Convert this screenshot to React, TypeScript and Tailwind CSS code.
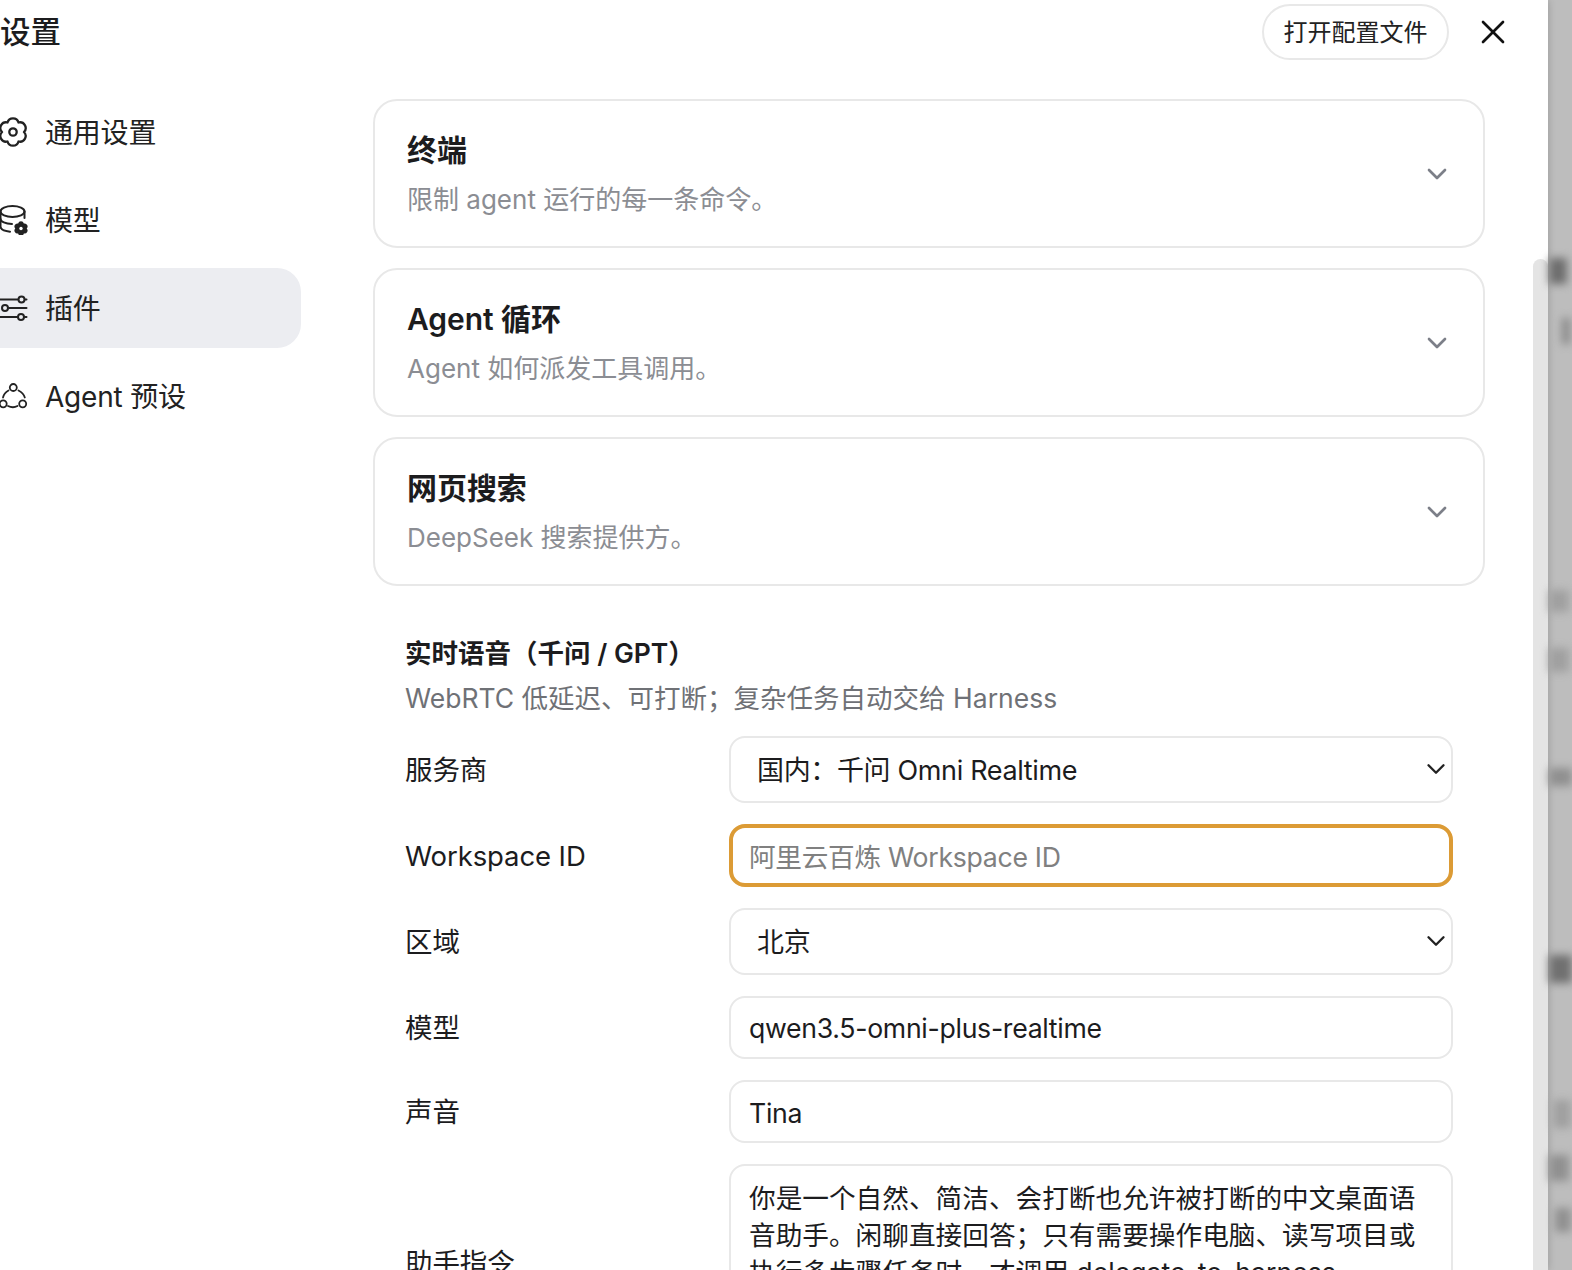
import {ChevronDown, X} from "lucide-react";

const fontStack =
  "font-['Inter','Noto_Sans_CJK_SC','Noto_Sans_CJK_JP',sans-serif]";

const lobes =
  "M11 0A5.7 5.7 0 0 1 5.5 9.5A5.7 5.7 0 0 1 -5.5 9.5A5.7 5.7 0 0 1 -11 0A5.7 5.7 0 0 1 -5.5 -9.5A5.7 5.7 0 0 1 5.5 -9.5A5.7 5.7 0 0 1 11 0Z";

function IconFrame({children}: {children: React.ReactNode}) {
  return (
    <svg
      width={30}
      height={30}
      viewBox="0 0 30 30"
      fill="none"
      stroke="currentColor"
      strokeWidth={2}
      strokeLinecap="round"
      strokeLinejoin="round"
      className="shrink-0"
    >
      {children}
    </svg>
  );
}

function GearIcon() {
  return (
    <IconFrame>
      <g transform="translate(13 15)" strokeWidth={2.3}>
        <path d={lobes} />
        <circle r={3.7} />
      </g>
    </IconFrame>
  );
}

function DatabaseIcon() {
  return (
    <IconFrame>
      <ellipse cx={12.5} cy={6.5} rx={12} ry={5.4} />
      <path d="M0.5 6.5v15c0 2.6 4 4.6 9.5 5.2" />
      <path d="M0.5 14c0 2.6 5 4.8 11.5 5" />
      <path d="M24.5 6.5v6.5" />
      <g transform="translate(21 23.5) scale(0.52)" fill="currentColor" stroke="none">
        <path d={lobes} />
      </g>
      <circle cx={21} cy={23.5} r={1.7} fill="white" stroke="none" />
    </IconFrame>
  );
}

function SlidersIcon() {
  return (
    <IconFrame>
      <path d="M0 6.5h18M25 6.5h1.5" />
      <circle cx={21.5} cy={6.5} r={3} />
      <path d="M9 15h17.5" />
      <circle cx={5} cy={15} r={3} />
      <path d="M0 24h17.5M24.5 24h2" />
      <circle cx={21} cy={24} r={3} />
    </IconFrame>
  );
}

function AgentIcon() {
  return (
    <IconFrame>
      <g strokeWidth={1.8}>
        <circle cx={13.3} cy={6.5} r={3.5} />
        <circle cx={3.2} cy={22.8} r={3.5} />
        <circle cx={22.7} cy={22.8} r={3.5} />
        <path d="M18.5 9.5Q23.5 12 24.8 16.5" />
        <path d="M8.5 9.5Q4 12 3 16.5" />
        <path d="M8 25Q13 27.5 17.5 25" />
      </g>
    </IconFrame>
  );
}

const navItems = [
  {label: "通用设置", icon: <GearIcon />},
  {label: "模型", icon: <DatabaseIcon />},
  {label: "插件", icon: <SlidersIcon />, active: true},
  {label: "Agent 预设", icon: <AgentIcon />},
];

const cards = [
  {title: "终端", desc: "限制 agent 运行的每一条命令。"},
  {title: "Agent 循环", desc: "Agent 如何派发工具调用。"},
  {title: "网页搜索", desc: "DeepSeek 搜索提供方。"},
];

function Card({title, desc}: {title: string; desc: string}) {
  return (
    <div className="flex h-[149px] items-center justify-between rounded-[24px] border-2 border-[#e8e8e8] pl-[32px] pr-[30px]">
      <div className="pt-[1px]">
        <div className="text-[30px] leading-[40px] font-semibold tracking-[-0.05px] text-[#1c1c1e]">
          {title}
        </div>
        <div className="mt-[12px] text-[26px] leading-[36px] text-[#8b8d93]">
          {desc}
        </div>
      </div>
      <ChevronDown size={32} strokeWidth={2} className="text-[#7c7f88]" />
    </div>
  );
}

function Row({label, children}: {label: string; children: React.ReactNode}) {
  return (
    <div className="grid grid-cols-[324px_724px] items-center">
      <label className="pt-[3px] text-[27.5px] tracking-[-0.1px] text-[#1c1c1e]">{label}</label>
      {children}
    </div>
  );
}

function SelectBox({value}: {value: string}) {
  return (
    <div className="relative">
      <select
        defaultValue={value}
        className="block h-[67.2px] w-full appearance-none rounded-[16px] border-2 border-[#e8e8e8] bg-white pl-[26px] pt-[3px] text-[27px] tracking-[-0.35px] text-[#1c1c1e]"
      >
        <option>{value}</option>
      </select>
      <ChevronDown
        size={30}
        strokeWidth={1.9}
        className="pointer-events-none absolute right-[2px] top-[18px] text-[#222]"
      />
    </div>
  );
}

function TextInput({value, placeholder, focused}: {value?: string; placeholder?: string; focused?: boolean}) {
  return (
    <input
      defaultValue={value}
      placeholder={placeholder}
      className={
        focused
          ? "h-[63.7px] w-full rounded-[16px] border-[4px] border-[#dc9b35] bg-white pl-[16px] pt-[2px] text-[26.67px] tracking-[-0.3px] text-[#1c1c1e] outline-none placeholder:text-[#808080]"
          : "h-[63.7px] w-full rounded-[16px] border-2 border-[#e8e8e8] bg-white pl-[18px] pt-[2px] text-[26.67px] tracking-[-0.3px] text-[#1c1c1e] outline-none placeholder:text-[#808080]"
      }
    />
  );
}

export default function App() {
  return (
    <main className={`relative flex h-[1270px] w-[1572px] overflow-hidden bg-[#bdbdbd] ${fontStack}`}>
      <section className="relative h-full w-[1548px] shrink-0 overflow-hidden bg-white shadow-[0_0_8px_rgba(0,0,0,0.2)]">
        <header className="flex h-[64px] items-center justify-between pr-[35px]">
          <h1 className="text-[30.5px] font-medium text-[#1c1c1e]">设置</h1>
          <div className="flex items-center gap-[24px]">
            <button className="h-[56px] w-[187px] rounded-full border-2 border-[#e8e8e8] pt-[1px] text-[24px] text-[#222]">
              打开配置文件
            </button>
            <X size={40} strokeWidth={1.6} className="text-[#111]" />
          </div>
        </header>

        <div className="flex">
          <nav className="flex w-[301px] shrink-0 flex-col gap-[8px] pt-[28px]">
            {navItems.map(({label, icon, active}) => (
              <div
                key={label}
                className={
                  active
                    ? "flex h-[80px] items-center gap-[15px] rounded-r-[24px] bg-[#ecedf1] text-[#222]"
                    : "flex h-[80px] items-center gap-[15px] rounded-r-[24px] text-[#222]"
                }
              >
                {icon}
                <span className="pt-[2px] text-[28px] tracking-[-0.2px]">{label}</span>
              </div>
            ))}
          </nav>

          <div className="ml-[72px] w-[1112px] pt-[35px]">
            <div className="flex flex-col gap-[20px]">
              {cards.map((c) => (
                <Card key={c.title} title={c.title} desc={c.desc} />
              ))}
            </div>

            <div className="px-[32px] pt-[49px]">
              <h2 className="text-[26.5px] leading-[36px] font-semibold text-[#1c1c1e]">
                实时语音（千问 / GPT）
              </h2>
              <p className="mt-[9px] text-[26.5px] leading-[36px] text-[#6f7176]">
                WebRTC 低延迟、可打断；复杂任务自动交给 Harness
              </p>

              <div className="mt-[20px] flex flex-col gap-[20.5px]">
                <Row label="服务商">
                  <SelectBox value="国内：千问 Omni Realtime" />
                </Row>
                <Row label="Workspace ID">
                  <TextInput placeholder="阿里云百炼 Workspace ID" focused />
                </Row>
                <Row label="区域">
                  <SelectBox value="北京" />
                </Row>
                <Row label="模型">
                  <TextInput value="qwen3.5-omni-plus-realtime" />
                </Row>
                <Row label="声音">
                  <TextInput value="Tina" />
                </Row>
                <Row label="助手指令">
                  <textarea
                    readOnly
                    defaultValue="你是一个自然、简洁、会打断也允许被打断的中文桌面语音助手。闲聊直接回答；只有需要操作电脑、读写项目或执行多步骤任务时，才调用 delegate_to_harness。"
                    className="block h-[197px] w-full resize-none rounded-[16px] border-2 border-[#e8e8e8] bg-white pl-[18px] pr-[20px] py-[14px] text-[26.67px] leading-[37px] text-[#1c1c1e] outline-none"
                  />
                </Row>
              </div>
            </div>
          </div>
        </div>

        {/* scrollbar thumb */}
        <div className="absolute right-0 top-[259px] h-[1011px] w-[15px] rounded-t-[8px] bg-[#e4e4e4]" />
      </section>

      {/* blurred app behind the drawer */}
      <div className="absolute left-[1549px] top-[258px] h-[26px] w-[18px] bg-[#6e6e6e] blur-[4px]" />
      <div className="absolute left-[1562px] top-[318px] h-[26px] w-[8px] bg-[#888] blur-[4px]" />
      <div className="absolute left-[1549px] top-[590px] h-[22px] w-[20px] bg-[#a0a0a0] blur-[4px]" />
      <div className="absolute left-[1549px] top-[648px] h-[24px] w-[20px] bg-[#a0a0a0] blur-[4px]" />
      <div className="absolute left-[1549px] top-[768px] h-[18px] w-[23px] bg-[#8f8f8f] blur-[4px]" />
      <div className="absolute left-[1549px] top-[955px] h-[28px] w-[23px] bg-[#707070] blur-[4px]" />
      <div className="absolute left-[1553px] top-[1100px] h-[28px] w-[18px] bg-[#a0a0a0] blur-[4px]" />
      <div className="absolute left-[1549px] top-[1155px] h-[26px] w-[20px] bg-[#909090] blur-[4px]" />
      <div className="absolute left-[1555px] top-[1208px] h-[24px] w-[16px] bg-[#909090] blur-[4px]" />
    </main>
  );
}
